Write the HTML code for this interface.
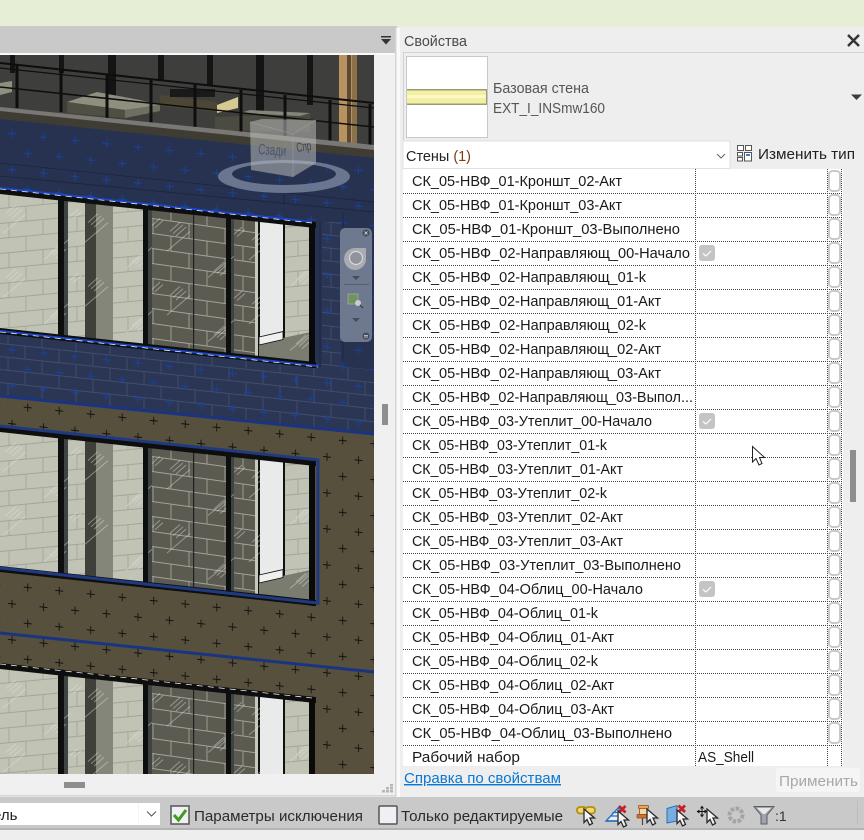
<!DOCTYPE html>
<html><head><meta charset="utf-8"><style>
html,body{margin:0;padding:0;background:#eee;width:864px;height:840px;overflow:hidden}
svg{display:block;font-family:"Liberation Sans",sans-serif}
</style></head><body>
<svg width="864" height="840" viewBox="0 0 864 840" xmlns="http://www.w3.org/2000/svg">
<defs>
<clipPath id="vp"><rect x="0" y="55" width="374" height="719"/></clipPath>
<pattern id="plusB" width="31.5" height="36" patternUnits="userSpaceOnUse" patternTransform="matrix(1,.105,0,1,4,125)">
<path d="M8 4V12M4 8H12M23.75 22V30M19.75 26H27.75" stroke="#1a40a0" stroke-width=".9" fill="none"/></pattern>
<pattern id="plusK" width="31.5" height="36" patternUnits="userSpaceOnUse" patternTransform="matrix(1,.105,0,1,4,415)">
<path d="M8 4V12M4 8H12M23.75 22V30M19.75 26H27.75" stroke="#111" stroke-width=".9" fill="none"/></pattern>
<pattern id="brickBlue" width="34" height="26" patternUnits="userSpaceOnUse" patternTransform="matrix(1,.105,0,1,0,330)">
<path d="M0 .5H34M0 13.5H34M8 0V13M25 13V26" stroke="#414d6d" stroke-width=".9" fill="none"/></pattern>
<pattern id="brickL" width="34" height="30" patternUnits="userSpaceOnUse" patternTransform="matrix(1,-.2,0,1,0,0)">
<path d="M0 .5H34M0 15.5H34M9 0V15M26 15V30" stroke="#a3a599" stroke-width=".9" fill="none"/></pattern>
<pattern id="brickD" width="36" height="30" patternUnits="userSpaceOnUse" patternTransform="matrix(1,.03,0,1,0,4)">
<path d="M0 .5H36M0 15.5H36M9 0V15M27 15V30" stroke="#a2a397" stroke-width=".9" fill="none"/></pattern>
<pattern id="hatch" width="82" height="64" patternUnits="userSpaceOnUse">
<g stroke="#e4e5df" stroke-width=".8" fill="none" opacity=".55"><path d="M6 20L16 10M9 22L19 12M12 24L22 14M3 40L26 18M50 55L60 45M53 57L63 47M56 59L66 49M44 62L70 38M70 16L78 8M73 18L81 10"/></g></pattern>
<g id="cur"><path d="M0 0V13.500L3 10.500L5.500 16L8.500 14.500L6 9H10.500Z" fill="#f4f4f4" stroke="#2a2a2e" stroke-width="1.300"/></g>
<g id="win">
<rect x="-2" y="0" width="60" height="138" fill="#c1c3b5"/><rect x="-2" y="0" width="60" height="138" fill="url(#brickL)"/>
<rect x="64" y="0" width="5" height="138" fill="#3d4443"/>
<rect x="68" y="0" width="18" height="138" fill="#c1c3b5"/><rect x="68" y="0" width="18" height="138" fill="url(#brickL)"/>
<rect x="85" y="0" width="11" height="138" fill="#3f403a"/>
<rect x="96" y="0" width="18" height="138" fill="#85867a"/>
<rect x="113" y="0" width="30" height="138" fill="#c1c3b5"/><rect x="113" y="0" width="30" height="138" fill="url(#brickL)"/>
<rect x="148" y="0" width="4" height="138" fill="#3d4443"/>
<rect x="152" y="0" width="74" height="138" fill="#5b5b51"/><rect x="152" y="0" width="74" height="138" fill="url(#brickD)"/>
<rect x="193" y="0" width="1.200" height="138" fill="#222"/>
<rect x="231" y="0" width="4" height="138" fill="#3d4443"/>
<rect x="234" y="0" width="22" height="138" fill="#5b5b51"/><rect x="234" y="0" width="22" height="138" fill="url(#brickD)"/>
<rect x="255" y="0" width="5" height="138" fill="#c8c9be"/>
<rect x="258" y="0" width="2" height="138" fill="#111"/>
<rect x="260" y="0" width="24" height="138" fill="#e9ebea"/>
<rect x="283" y="0" width="3" height="138" fill="#111"/>
<rect x="285" y="0" width="24" height="138" fill="#c1c3b5"/><rect x="285" y="0" width="24" height="138" fill="url(#brickL)"/>
<path d="M259 122L309 106V138H259Z" fill="#7b7c70"/>
<path d="M259 116L283 108V116L259 124Z" fill="#f0f0ee" stroke="#111" stroke-width=".8"/>
<rect x="0" y="0" width="310" height="138" fill="url(#hatch)"/>
<rect x="-2" y="-5" width="318" height="6" fill="#0e0e0e"/>
<rect x="-2" y="135" width="318" height="6" fill="#0e0e0e"/>
<rect x="58" y="-5" width="6" height="146" fill="#0d0f0e"/>
<rect x="143" y="-5" width="5" height="146" fill="#0d0f0e"/>
<rect x="226" y="-5" width="5" height="146" fill="#0d0f0e"/>
<rect x="309" y="-5" width="6" height="146" fill="#0a0a0a"/>
</g>
</defs>

<rect width="864" height="840" fill="#eeeeee"/>
<rect width="864" height="26" fill="#e6efd6"/>
<rect y="26" width="864" height="2" fill="#e9eee0"/>
<rect y="26" width="397" height="27" fill="#c9c9c9"/>
<rect y="53" width="397" height="2" fill="#fafafa"/>
<path d="M381 36H391V37.500H381ZM381 39H391L386 44.500Z" fill="#333"/>

<g clip-path="url(#vp)">
<rect y="55" width="374" height="110" fill="#3e3e3c"/>
<g fill="#141414"><rect x="10" y="55" width="5" height="18"/><rect x="59" y="55" width="5" height="18"/><rect x="108" y="55" width="8" height="45"/><rect x="158" y="55" width="6" height="25"/><rect x="207" y="55" width="6" height="30"/><rect x="256" y="55" width="8" height="60"/><rect x="307" y="55" width="6" height="50"/></g>
<rect x="339" y="55" width="18" height="90" fill="#b8935f"/>
<rect x="347" y="55" width="4" height="90" fill="#5c4a32"/>
<rect x="352" y="55" width="5" height="90" fill="#8c7148"/>
<path d="M67 102L97 92L140 100L160 105L125 110Z" fill="#8e8f7f"/>
<path d="M67 102L125 110V118L67 113Z" fill="#4f4f43"/>
<path d="M125 110L160 105V111L125 118Z" fill="#6f6f61"/>
<path d="M160 95L217 102V112L160 106Z" fill="#4c4735"/>
<rect x="170" y="89" width="45" height="8" fill="#1a1a1a"/>
<path d="M217 105L238 97V108L217 113Z" fill="#d6ca92"/>
<path d="M215 117L310 113V132L215 130Z" fill="#4b4b41"/>
<path d="M240 113L300 116L310 113L250 110Z" fill="#85867a"/>
<path d="M0 83L12 81V92L0 95Z" fill="#8e8f7f"/>
<g stroke="#0e0e0e" fill="none">
<path d="M0 63L374 103" stroke-width="2"/><path d="M0 68L374 108" stroke-width="1.200"/>
<path d="M0 87L374 127" stroke-width="1.500"/>
<path d="M17 65V108M61 70V112M107 75V118M151 80V123M195 85V128M241 90V132M285 95V137M330 100V142M370 104V146" stroke-width="3"/>
</g>
<path d="M0 107L374 145V157L0 120Z" fill="#7a7874"/>
<path d="M0 111L374 150V158L0 120Z" fill="#3f3c33"/>
<path d="M0 119L374 158V440L0 400Z" fill="#26324f"/>
<path d="M0 330L374 370V440L0 400Z" fill="#2b3655"/>
<path d="M0 330L374 370V440L0 400Z" fill="url(#brickBlue)"/>
<rect x="322" y="222" width="19" height="160" fill="#2b3655"/><rect x="322" y="222" width="19" height="160" fill="url(#brickBlue)"/>
<path d="M0 119L374 158V440L0 400Z" fill="url(#plusB)"/>
<path d="M0 163L374 202M0 176L374 212M284 190V205M343 212V360M320 222V368" stroke="#1a2440" stroke-width=".8" fill="none"/>
<path d="M0 396L374 434V780H0Z" fill="#57503c"/>
<path d="M0 396L374 434V780H0Z" fill="url(#plusK)"/>
<path d="M0 396L374 434M0 633L374 672" stroke="#1a3482" stroke-width="3" fill="none"/>
<use href="#win" transform="matrix(1,.108,0,1,0,193)"/>
<use href="#win" transform="matrix(1,.108,0,1,0,431)"/>
<use href="#win" transform="matrix(1,.108,0,1,0,668)"/>
<path d="M0 188L312 222" stroke="#1c48c8" stroke-width="2" fill="none"/>
<path d="M0 189L312 223" stroke="#e8e8e8" stroke-width=".8" stroke-dasharray="6 5" fill="none"/>
<path d="M0 331L318 366" stroke="#1c48c8" stroke-width="2" fill="none"/>
<path d="M0 332L318 367" stroke="#e8e8e8" stroke-width=".8" stroke-dasharray="6 5" fill="none"/>
<path d="M0 426L318 460V605" stroke="#1f3a80" stroke-width="3" fill="none"/>
<path d="M0 568L318 603" stroke="#1f3a80" stroke-width="3" fill="none"/>
<path d="M0 664L312 698" stroke="#e8e8e8" stroke-width=".8" stroke-dasharray="6 5" fill="none"/>
<path fill-rule="evenodd" fill="#6a7590" d="M218 176.500a66 16.500 0 1 0 132 0a66 16.500 0 1 0 -132 0ZM232 174a52 11 0 1 1 104 0a52 11 0 1 1 -104 0Z"/>
<path d="M250 122L262 119L316 120V163L293 177L251 170Z" fill="#b8b9b8" opacity=".55"/>
<path d="M293 134V177M250 122L293 134L316 120" stroke="#aaa" stroke-width=".8" fill="none" opacity=".5"/>
<text x="258" y="154" font-size="15" fill="#4f5664" textLength="28" lengthAdjust="spacingAndGlyphs" transform="rotate(4 258 154)">Сзади</text>
<text x="297" y="152" font-size="13" fill="#3f444e" textLength="15" lengthAdjust="spacingAndGlyphs" transform="rotate(-8 297 152)">Спр</text>
<rect x="340" y="228" width="32" height="114" rx="5" fill="#6e788e"/>
<circle cx="366" cy="233" r="3.500" fill="#444b5c"/><path d="M364.500 231.500L367.500 234.500M367.500 231.500L364.500 234.500" stroke="#ddd" stroke-width=".8"/>
<path d="M356 248h10v12a11 11 0 1 1-10-12z" fill="#a9acb0"/><circle cx="356" cy="258" r="6.500" fill="#8f939b" stroke="#d6d8da" stroke-width="1.200"/>
<path d="M352 276h8l-4 4z" fill="#454b5b"/>
<rect x="344" y="284" width="25" height="1" fill="#565f73"/>
<rect x="348" y="294" width="10" height="10" fill="#6f9164" stroke="#b0b5a8" stroke-width=".6"/>
<circle cx="358" cy="303" r="3" fill="#c9ccce"/><path d="M360 305l3 3" stroke="#333" stroke-width="1"/>
<path d="M352 318h8l-4 4z" fill="#454b5b"/>
<circle cx="366" cy="336" r="3.500" fill="#444b5c"/><path d="M364 335.500h4M364 337h4" stroke="#ddd" stroke-width=".8"/>
</g>

<rect x="374" y="55" width="21" height="742" fill="#f0f0f0"/>
<rect y="774" width="395" height="21" fill="#f0f0f0"/>
<rect x="395" y="28" width="1.500" height="769" fill="#d4d4d4"/>
<rect x="396.500" y="28" width="3.500" height="769" fill="#fafafa"/>
<rect y="795" width="396" height="1.500" fill="#d6d6d6"/>
<rect x="382" y="404" width="6" height="21" fill="#8e8e8e"/>
<rect x="64" y="782" width="21" height="6" fill="#8e8e8e"/>
<g fill="#b5b5b5"><rect x="390" y="784" width="3" height="2.500"/><rect x="386" y="787" width="3" height="2.500"/><rect x="390" y="787" width="3" height="2.500"/><rect x="382" y="790" width="3" height="2.500"/><rect x="386" y="790" width="3" height="2.500"/><rect x="390" y="790" width="3" height="2.500"/></g>

<rect x="400" y="28" width="464" height="769" fill="#eeeeee"/>
<text x="404" y="46" font-size="14.500" fill="#4a4a4a" textLength="63" lengthAdjust="spacingAndGlyphs">Свойства</text>
<path d="M848 35L859 46M859 35L848 46" stroke="#333" stroke-width="2.400" fill="none"/>
<path d="M403.500 140V52.500H864" fill="none" stroke="#d2d2d2"/>
<rect x="406.500" y="56.500" width="81" height="81" fill="#fff" stroke="#c8c8c8"/>
<rect x="407" y="89" width="80" height="16" fill="#9b9a78"/>
<rect x="407" y="90.500" width="79" height="13" fill="#f3f0a4"/>
<rect x="407" y="95" width="79" height="3" fill="#fbf9c4"/>
<text x="493" y="93" font-size="14.500" fill="#555" textLength="96" lengthAdjust="spacingAndGlyphs">Базовая стена</text>
<text x="493" y="113" font-size="14.500" fill="#555" textLength="112" lengthAdjust="spacingAndGlyphs">EXT_I_INSmw160</text>
<path d="M851 94.500H862L856.500 100Z" fill="#3c3c3c"/>

<rect x="403" y="141" width="327" height="27.500" rx="1" fill="#fff" stroke="#e0e0e0"/>
<text x="406" y="161" font-size="15" fill="#222" textLength="65" lengthAdjust="spacingAndGlyphs">Стены <tspan fill="#7a3b16">(1)</tspan></text>
<path d="M717 154L721 158L725 154" stroke="#666" fill="none"/>
<g fill="#fff" stroke="#555" stroke-width="1"><rect x="737.500" y="145.500" width="6" height="5"/><rect x="745.500" y="145.500" width="6" height="5"/><rect x="737.500" y="152.500" width="5" height="3.500"/><rect x="737.500" y="157.500" width="5" height="3.500"/><rect x="744.500" y="152.500" width="7" height="8.500"/></g>
<rect x="746" y="154" width="4" height="2" fill="#3a7dc8"/>
<text x="758" y="159" font-size="15" fill="#222" textLength="97" lengthAdjust="spacingAndGlyphs">Изменить тип</text>

<rect x="403" y="169" width="440" height="597" fill="#fff"/>
<g stroke="#444" stroke-width="1" stroke-dasharray="1 1" fill="none">
<path d="M403 193.500H842M403 217.500H842M403 241.500H842M403 265.500H842M403 289.500H842M403 313.500H842M403 337.500H842M403 361.500H842M403 385.500H842M403 409.500H842M403 433.500H842M403 457.500H842M403 481.500H842M403 505.500H842M403 529.500H842M403 553.500H842M403 577.500H842M403 601.500H842M403 625.500H842M403 649.500H842M403 673.500H842M403 697.500H842M403 721.500H842M403 745.500H842"/>
<path d="M695.500 169V766M827.500 169V766M841.500 169V766"/>
</g>
<g fill="#fff" stroke="#c9c9c9" stroke-width="2">
<rect x="829" y="171" width="11" height="20" rx="3.500"/><rect x="829" y="195" width="11" height="20" rx="3.500"/><rect x="829" y="219" width="11" height="20" rx="3.500"/><rect x="829" y="243" width="11" height="20" rx="3.500"/><rect x="829" y="267" width="11" height="20" rx="3.500"/><rect x="829" y="291" width="11" height="20" rx="3.500"/><rect x="829" y="315" width="11" height="20" rx="3.500"/><rect x="829" y="339" width="11" height="20" rx="3.500"/><rect x="829" y="363" width="11" height="20" rx="3.500"/><rect x="829" y="387" width="11" height="20" rx="3.500"/><rect x="829" y="411" width="11" height="20" rx="3.500"/><rect x="829" y="435" width="11" height="20" rx="3.500"/><rect x="829" y="459" width="11" height="20" rx="3.500"/><rect x="829" y="483" width="11" height="20" rx="3.500"/><rect x="829" y="507" width="11" height="20" rx="3.500"/><rect x="829" y="531" width="11" height="20" rx="3.500"/><rect x="829" y="555" width="11" height="20" rx="3.500"/><rect x="829" y="579" width="11" height="20" rx="3.500"/><rect x="829" y="603" width="11" height="20" rx="3.500"/><rect x="829" y="627" width="11" height="20" rx="3.500"/><rect x="829" y="651" width="11" height="20" rx="3.500"/><rect x="829" y="675" width="11" height="20" rx="3.500"/><rect x="829" y="699" width="11" height="20" rx="3.500"/><rect x="829" y="723" width="11" height="20" rx="3.500"/>
</g>
<g font-size="14.500" fill="#1a1a1a">
<text x="412" y="186" textLength="210" lengthAdjust="spacingAndGlyphs">СК_05-НВФ_01-Кроншт_02-Акт</text>
<text x="412" y="210" textLength="210" lengthAdjust="spacingAndGlyphs">СК_05-НВФ_01-Кроншт_03-Акт</text>
<text x="412" y="234" textLength="268" lengthAdjust="spacingAndGlyphs">СК_05-НВФ_01-Кроншт_03-Выполнено</text>
<text x="412" y="258" textLength="278" lengthAdjust="spacingAndGlyphs">СК_05-НВФ_02-Направляющ_00-Начало</text>
<text x="412" y="282" textLength="234" lengthAdjust="spacingAndGlyphs">СК_05-НВФ_02-Направляющ_01-k</text>
<text x="412" y="306" textLength="249" lengthAdjust="spacingAndGlyphs">СК_05-НВФ_02-Направляющ_01-Акт</text>
<text x="412" y="330" textLength="234" lengthAdjust="spacingAndGlyphs">СК_05-НВФ_02-Направляющ_02-k</text>
<text x="412" y="354" textLength="249" lengthAdjust="spacingAndGlyphs">СК_05-НВФ_02-Направляющ_02-Акт</text>
<text x="412" y="378" textLength="249" lengthAdjust="spacingAndGlyphs">СК_05-НВФ_02-Направляющ_03-Акт</text>
<text x="412" y="402" textLength="281" lengthAdjust="spacingAndGlyphs">СК_05-НВФ_02-Направляющ_03-Выпол...</text>
<text x="412" y="426" textLength="240" lengthAdjust="spacingAndGlyphs">СК_05-НВФ_03-Утеплит_00-Начало</text>
<text x="412" y="450" textLength="195" lengthAdjust="spacingAndGlyphs">СК_05-НВФ_03-Утеплит_01-k</text>
<text x="412" y="474" textLength="211" lengthAdjust="spacingAndGlyphs">СК_05-НВФ_03-Утеплит_01-Акт</text>
<text x="412" y="498" textLength="195" lengthAdjust="spacingAndGlyphs">СК_05-НВФ_03-Утеплит_02-k</text>
<text x="412" y="522" textLength="211" lengthAdjust="spacingAndGlyphs">СК_05-НВФ_03-Утеплит_02-Акт</text>
<text x="412" y="546" textLength="211" lengthAdjust="spacingAndGlyphs">СК_05-НВФ_03-Утеплит_03-Акт</text>
<text x="412" y="570" textLength="269" lengthAdjust="spacingAndGlyphs">СК_05-НВФ_03-Утеплит_03-Выполнено</text>
<text x="412" y="594" textLength="231" lengthAdjust="spacingAndGlyphs">СК_05-НВФ_04-Облиц_00-Начало</text>
<text x="412" y="618" textLength="186" lengthAdjust="spacingAndGlyphs">СК_05-НВФ_04-Облиц_01-k</text>
<text x="412" y="642" textLength="202" lengthAdjust="spacingAndGlyphs">СК_05-НВФ_04-Облиц_01-Акт</text>
<text x="412" y="666" textLength="186" lengthAdjust="spacingAndGlyphs">СК_05-НВФ_04-Облиц_02-k</text>
<text x="412" y="690" textLength="202" lengthAdjust="spacingAndGlyphs">СК_05-НВФ_04-Облиц_02-Акт</text>
<text x="412" y="714" textLength="202" lengthAdjust="spacingAndGlyphs">СК_05-НВФ_04-Облиц_03-Акт</text>
<text x="412" y="738" textLength="260" lengthAdjust="spacingAndGlyphs">СК_05-НВФ_04-Облиц_03-Выполнено</text>
<text x="412" y="762" textLength="108" lengthAdjust="spacingAndGlyphs">Рабочий набор</text>
<text x="698" y="762" textLength="56" lengthAdjust="spacingAndGlyphs">AS_Shell</text>
</g>
<rect x="699" y="245" width="16" height="16" rx="3" fill="#c4c4c4"/><path d="M703 253.500L706 256L711 251" stroke="#fff" stroke-width="1.200" fill="none"/>
<rect x="699" y="413" width="16" height="16" rx="3" fill="#c4c4c4"/><path d="M703 421.500L706 424L711 419" stroke="#fff" stroke-width="1.200" fill="none"/>
<rect x="699" y="581" width="16" height="16" rx="3" fill="#c4c4c4"/><path d="M703 589.500L706 592L711 587" stroke="#fff" stroke-width="1.200" fill="none"/>
<path d="M752.500 446.500V462L756 458.500L759 465L762 463.500L759.500 457.500L764.500 457.500Z" fill="#fff" stroke="#222" stroke-width="1"/>
<rect x="850" y="450" width="6" height="52" fill="#8e8e8e"/>
<text x="404" y="783" font-size="14.500" fill="#0a78d4" text-decoration="underline" textLength="157" lengthAdjust="spacingAndGlyphs">Справка по свойствам</text>
<rect x="776" y="768" width="84" height="24" rx="3" fill="#f5f5f5"/>
<text x="779" y="786" font-size="14.500" fill="#a8a8a8" textLength="79" lengthAdjust="spacingAndGlyphs">Применить</text>

<rect y="797" width="864" height="31" fill="#c9c9c9"/>
<rect y="828" width="864" height="2" fill="#b4b4b4"/>
<rect y="830" width="864" height="10" fill="#eeeeee"/>
<rect x="0" y="803" width="160" height="22" fill="#fff"/>
<rect x="138" y="803" width="1" height="22" fill="#f4f4f4"/>
<text x="-7" y="820" font-size="15" fill="#222">ель</text>
<path d="M147 811.500L151.500 816L156 811.500" stroke="#555" fill="none"/>
<rect x="171" y="806" width="18" height="18" fill="#eef0f4" stroke="#555" stroke-width="1.500"/>
<path d="M174 815L178.500 820L186 810" stroke="#3f9a1f" stroke-width="3" fill="none"/>
<text x="194" y="821" font-size="15" fill="#2a2a2a" textLength="169" lengthAdjust="spacingAndGlyphs">Параметры исключения</text>
<rect x="379" y="806" width="18" height="18" rx="1" fill="#eef0f4" stroke="#555" stroke-width="1.500"/>
<text x="401" y="821" font-size="15" fill="#2a2a2a" textLength="162" lengthAdjust="spacingAndGlyphs">Только редактируемые</text>

<g fill="#f3d768" stroke="#b08f10" stroke-width="1.800"><rect x="577" y="807" width="9.500" height="6.500" rx="3"/><rect x="585.500" y="807" width="9.500" height="6.500" rx="3"/></g>
<use href="#cur" transform="translate(584,809)"/>
<path d="M606 821L619 807V821ZM610 816H619M612.500 812.500H619" fill="#e8eef6" stroke="#2a6fc2" stroke-width="1.300"/>
<path d="M606 821H622" stroke="#2a6fc2" stroke-width="1.600"/>
<path d="M619 806L625.500 812.500M625.500 806L619 812.500" stroke="#c8202a" stroke-width="2.800" fill="none"/>
<use href="#cur" transform="translate(618,811)"/>
<rect x="638.500" y="805.500" width="10" height="3" rx=".5" fill="#e5a65e" stroke="#9a4f1e" stroke-width=".8"/>
<rect x="639.500" y="808.500" width="8" height="6" fill="#f0d8a8" stroke="#b5622a" stroke-width="1"/>
<rect x="637" y="814.500" width="13" height="3.500" rx=".5" fill="#d5702f" stroke="#8a4a1e" stroke-width=".7"/>
<path d="M642.500 818V825" stroke="#444" stroke-width="1.200"/>
<use href="#cur" transform="translate(647,809)"/>
<path d="M667 808.500L677 805.500V821L667 823Z" fill="#77aee0" stroke="#2a70b4" stroke-width="1"/>
<path d="M678.500 805.500L685 812M685 805.500L678.500 812" stroke="#c8202a" stroke-width="2.800" fill="none"/>
<use href="#cur" transform="translate(677,810)"/>
<path d="M702 807V816M697 811.500H707M700.500 808.500L702 806.500L703.500 808.500M700.500 814.500L702 816.500L703.500 814.500M699.500 810L697.500 811.500L699.500 813M704.500 810L706.500 811.500L704.500 813" stroke="#111" stroke-width="1" fill="none"/>
<use href="#cur" transform="translate(707,809)"/>
<circle cx="736" cy="815" r="6.500" fill="none" stroke="#a4a4a4" stroke-width="4" stroke-dasharray="3.500 1.500"/>
<path d="M754 806.500H774L767 815V824H761V815Z" fill="#9fa4aa" stroke="#5c6066" stroke-width="1"/>
<path d="M757 808H771L765 814H763Z" fill="#e6e8ea"/>
<text x="775" y="821" font-size="14" fill="#333">:1</text>
<rect x="857" y="801" width="1" height="24" fill="#bcbcbc"/>
</svg>
</body></html>
